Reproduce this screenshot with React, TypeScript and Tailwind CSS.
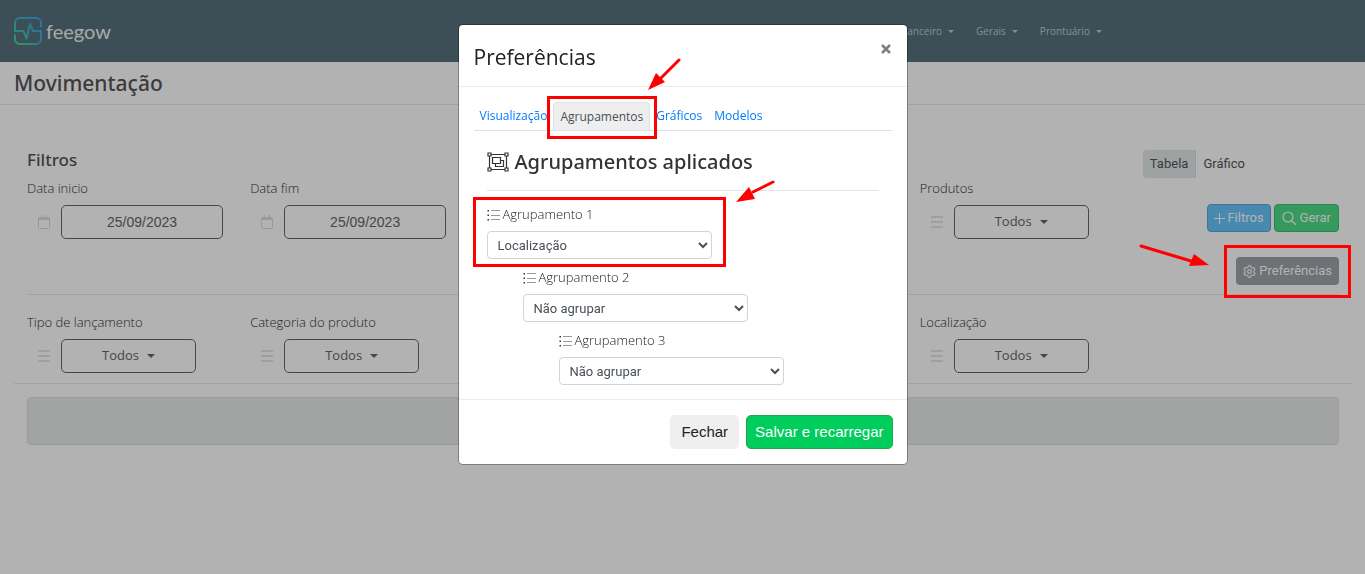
import { useState, type ReactNode } from 'react';
import clsx from 'clsx';

function Caret({ className }: { className?: string }) {
  return (
    <svg viewBox="0 0 8 4" className={clsx('shrink-0', className)} fill="currentColor">
      <path d="M0 0h8L4 4z" />
    </svg>
  );
}

function Logo() {
  return (
    <a href="#" className="flex items-center gap-1 text-[#f0f2f3]">
      <svg width="28" height="28" viewBox="0 0 28 28" fill="none" stroke="url(#logo)" strokeWidth="2" strokeLinejoin="round">
        <defs>
          <linearGradient id="logo" x1="0" y1="28" x2="28" y2="0" gradientUnits="userSpaceOnUse">
            <stop offset="0" stopColor="#4be08a" />
            <stop offset="0.5" stopColor="#3cb4c8" />
            <stop offset="1" stopColor="#4a9cee" />
          </linearGradient>
        </defs>
        <path d="M27 10.500V6a5 5 0 0 0-5-5H6a5 5 0 0 0-5 5v8h8.500l3 7.500L16 7l3 7h8v8a5 5 0 0 1-5 5H6a5 5 0 0 1-5-5v-4.500" />
      </svg>
      <span className="font-['Lato'] text-xl leading-7">feegow</span>
    </a>
  );
}

function CalendarIcon() {
  return (
    <svg width="12" height="14" viewBox="0 0 12 14" fill="none" stroke="currentColor">
      <rect x="0.5" y="2.5" width="11" height="11" rx="1" />
      <path d="M1 3.500h10M1 4.500h10M3.500 0v3M8.500 0v3" />
    </svg>
  );
}

function BarsIcon() {
  return (
    <svg width="12" height="12" viewBox="0 0 12 12" fill="none" stroke="currentColor" strokeWidth="1.500">
      <path d="M0 1h12M0 6h12M0 11h12" />
    </svg>
  );
}

function ListIcon() {
  return (
    <svg width="13" height="11" viewBox="0 0 13 11" className="shrink-0">
      <path d="M.5 0H2v1.500H.5zM.5 4.500H2V6H.5zM.5 9H2v1.500H.5z" fill="#333" />
      <path d="M4 .5h9M4 5.500h9M4 9.500h9" stroke="#999" />
    </svg>
  );
}

function GroupIcon() {
  return (
    <svg width="22" height="20" viewBox="0 0 22 20" fill="none" stroke="#333" strokeWidth="1.200" className="shrink-0">
      <path d="M3 2.500h16M3 17.500h16M2.500 3v14M19.500 3v14" />
      <path d="M1 1h3v3H1zM18 1h3v3h-3zM1 16h3v3H1zM18 16h3v3h-3z" fill="#fff" />
      <path d="M5.500 5.500h8v6h-8z" />
      <path d="M13.500 8.500h3v6h-8v-3" />
    </svg>
  );
}

function GearIcon() {
  return (
    <svg width="13" height="13" viewBox="0 0 16 16" fill="none" stroke="currentColor" strokeWidth="1.300" strokeLinejoin="round">
      <path d="M6.500 1h3l.4 2 1.500.9 2-.7 1.500 2.600-1.600 1.300v1.800l1.600 1.300-1.500 2.600-2-.7-1.500.9-.4 2h-3l-.4-2-1.500-.9-2 .7-1.500-2.600 1.600-1.300V7.100L1.100 5.800l1.500-2.600 2 .7L6.100 3z" />
      <circle cx="8" cy="8" r="2.300" />
    </svg>
  );
}

// Red frame and arrow that point out a control in the tutorial
function Frame({ className }: { className: string }) {
  return <span aria-hidden className={clsx('pointer-events-none absolute border-3 border-[#ff0000]', className)} />;
}

function Arrow({ className, width, height, line, head }: { className: string; width: number; height: number; line: string; head: string }) {
  return (
    <svg aria-hidden width={width} height={height} className={clsx('pointer-events-none absolute', className)}>
      <path d={line} stroke="#ff0000" strokeWidth="3" strokeLinecap="round" />
      <path d={head} fill="#ff0000" />
    </svg>
  );
}

function DateField({ id, label }: { id: string; label: string }) {
  const [value, setValue] = useState('25/09/2023');
  return (
    <div>
      <label htmlFor={id} className="block text-[13px] leading-5 font-light text-[#333]">{label}</label>
      <div className="mt-[7px] flex items-center">
        <span className="flex w-[34px] justify-center text-[#dcdcdc]"><CalendarIcon /></span>
        <input
          id={id}
          type="text"
          value={value}
          onChange={(e) => setValue(e.target.value)}
          className="h-[34px] w-[162px] rounded-[5px] border border-[#666] text-center font-['Liberation_Sans',sans-serif] text-sm text-[#666]"
        />
      </div>
    </div>
  );
}

function DropdownField({ id, label }: { id: string; label: string }) {
  return (
    <div>
      <label htmlFor={id} className="block text-[13px] leading-5 font-light text-[#333]">{label}</label>
      <div className="mt-[7px] flex items-center">
        <span className="flex w-[34px] justify-center text-[#dcdcdc]"><BarsIcon /></span>
        <button id={id} type="button" className="flex h-[34px] w-[135px] items-center justify-center gap-2 rounded-[5px] border border-[#666] text-[13px] text-[#666]">
          Todos
          <Caret className="h-1 w-2" />
        </button>
      </div>
    </div>
  );
}

function GroupSelect({ level, initial, className }: { level: number; initial: string; className?: string }) {
  const [value, setValue] = useState(initial);
  const id = `agrupamento-${level}`;
  return (
    <div className={clsx('w-[225px]', className)}>
      <label htmlFor={id} className="flex h-5 items-center gap-[3px] text-[13px] font-light text-[#222]">
        <ListIcon />
        Agrupamento {level}
      </label>
      <select
        id={id}
        value={value}
        onChange={(e) => setValue(e.target.value)}
        className="mt-1.5 block h-7 w-full rounded-[4px] border border-[#ced4da] bg-white px-1.5 font-['Roboto',sans-serif] text-[13px] text-[#495057]"
      >
        <option>Localização</option>
        <option>Não agrupar</option>
      </select>
    </div>
  );
}

const menus = ['Financeiro', 'Gerais', 'Prontuário'];
const tabs = ['Visualização', 'Agrupamentos', 'Gráficos', 'Modelos'];

function Modal({ children }: { children: ReactNode }) {
  return (
    <div className="fixed inset-0 z-40 flex items-start justify-center bg-black/30 pt-[25px]">
      <div role="dialog" aria-label="Preferências" className="relative w-[448px] rounded-[4px] bg-white shadow-[0_0_0_1px_rgba(0,0,0,0.3)]">
        {children}
      </div>
    </div>
  );
}

export default function App() {
  const [activeTab, setActiveTab] = useState('Agrupamentos');

  return (
    <div className="font-['Open_Sans','Noto_Sans',sans-serif] text-[#555]">
      <header className="flex h-[62px] items-center justify-between bg-[#57717c] pl-3.5 pr-[263px]">
        <Logo />
        <nav className="flex gap-[22px] text-[10px] text-[#c0cacf]">
          {menus.map((menu) => (
            <a key={menu} href="#" className="flex items-center gap-1.5">
              {menu}
              <Caret className="h-[3px] w-1.5" />
            </a>
          ))}
        </nav>
      </header>

      <div className="flex h-[43px] items-center border-b border-[#e9e9e9] px-3.5">
        <h1 className="font-['Noto_Sans',sans-serif] text-[21px] leading-7 font-medium">Movimentação</h1>
      </div>

      <main className="pt-[45px] pr-[13px] pl-3.5">
        {/* Filtros */}
        <section className="border-b border-[#e9e9e9]">
          <div className="mx-[13px] grid grid-cols-6 grid-rows-[auto_1fr] gap-x-[27px] border-b border-[#e9e9e9] pb-[9px]">
            <h2 className="col-span-5 font-['Noto_Sans',sans-serif] text-[17px] leading-5 font-medium">Filtros</h2>
            <div className="row-span-2 flex flex-col items-end">
              <div className="flex self-start font-['Roboto',sans-serif] text-[13px] text-[#555]">
                <button type="button" className="h-7 rounded-l-[4px] border-r border-[#d5dbde] bg-[#e3e8ea] px-[7px]">Tabela</button>
                <button type="button" className="h-7 rounded-r-[4px] bg-white px-[7px]">Gráfico</button>
              </div>
              <div className="mt-[26px] flex gap-[3px] font-['Roboto',sans-serif] text-[13px] text-white">
                <button type="button" className="flex h-7 items-center gap-0.5 rounded-[4px] border border-[#52a9dc] bg-[#67c5fb] px-1.5">
                  <svg width="11" height="11" viewBox="0 0 11 11" stroke="currentColor"><path d="M0 5.500h11M5.500 0v11" /></svg>
                  Filtros
                </button>
                <button type="button" className="flex h-7 items-center gap-1 rounded-[4px] border border-[#48b978] bg-[#4edb86] px-[7px]">
                  <svg width="14" height="14" viewBox="0 0 14 14" fill="none" stroke="currentColor" strokeWidth="1.200" strokeLinecap="round"><circle cx="6" cy="6" r="5" /><path d="m9.500 9.500 4 4" /></svg>
                  Gerar
                </button>
              </div>
              <div className="relative mt-[25px]">
                <button type="button" className="flex h-7 items-center gap-[3px] rounded-[4px] bg-[#9ea2a8] px-[7px] font-['Roboto',sans-serif] text-[13px] text-white">
                  <GearIcon />
                  Preferências
                </button>
                <Frame className="-top-3 -right-3 -bottom-[13px] -left-3 z-50" />
                <Arrow
                  className="-top-3.5 right-[128px] z-50"
                  width={72}
                  height={26}
                  line="M2 3l50 15"
                  head="M70 22l-20 1 5-12z"
                />
              </div>
            </div>
            <div className="col-span-5 grid grid-cols-5 gap-x-[27px] pt-2">
              <DateField id="data-inicio" label="Data inicio" />
              <DateField id="data-fim" label="Data fim" />
              <div className="col-start-5"><DropdownField id="produtos" label="Produtos" /></div>
            </div>
          </div>
          <div className="mx-[13px] grid grid-cols-6 gap-x-[27px] pt-[17px] pb-[10px]">
            <DropdownField id="tipo" label="Tipo de lançamento" />
            <DropdownField id="categoria" label="Categoria do produto" />
            <div className="col-start-5"><DropdownField id="localizacao" label="Localização" /></div>
          </div>
        </section>
        <div className="mx-[13px] mt-[13px] h-12 rounded-[4px] border border-[#dce1e1] bg-[#e8ebea]" />
      </main>

      <Modal>
        <div className="flex h-[62px] items-start justify-between border-b border-[#e9ecef] pt-[18px] pr-[15px] pl-[15px]">
          <h2 className="text-[21px] leading-7 text-[#222]">Preferências</h2>
          <button type="button" aria-label="Fechar" className="flex h-3 w-3 items-center justify-center text-[#7f7f7f]">
            <svg width="10" height="10" viewBox="0 0 10 10" stroke="currentColor" strokeWidth="2.500"><path d="m1 1 8 8M9 1 1 9" /></svg>
          </button>
        </div>

        <div className="px-[15px] pt-[15px] pb-3.5">
          <div role="tablist" className="flex border-b border-[#dee2e6] text-xs">
            {tabs.map((tab) => (
              <div key={tab} className="relative">
                <button
                  type="button"
                  role="tab"
                  aria-selected={tab === activeTab}
                  onClick={() => setActiveTab(tab)}
                  className={clsx(
                    'h-7 rounded-t-[4px] px-1.5',
                    tab === activeTab ? 'border border-b-0 border-[#dee2e6] bg-[#eee] text-[#495057]' : 'text-[#007bff]',
                  )}
                >
                  {tab}
                </button>
                {tab === 'Agrupamentos' && (
                  <>
                    <Frame className="-top-1.5 -right-[7px] -bottom-[9px] -left-1.5" />
                    <Arrow
                      className="-top-11 -right-[31px]"
                      width={34}
                      height={34}
                      line="M32 2L13 21"
                      head="M1 32l8-17 9 9z"
                    />
                  </>
                )}
              </div>
            ))}
          </div>

          <div className="px-[13px] pt-[17px]">
            <h3 className="flex items-center gap-1.5 border-b border-[#e5e5e5] pb-3.5 font-['Noto_Sans',sans-serif] text-xl leading-7 font-medium text-[#333]">
              <GroupIcon />
              Agrupamentos aplicados
            </h3>
            <div className="mt-3.5 flex flex-col gap-[9px]">
              <div className="relative w-[225px]">
                <GroupSelect level={1} initial="Localização" />
                <Frame className="-top-2 -right-3.5 -bottom-2 -left-3.5" />
                <Arrow
                  className="-top-[26px] -right-[63px]"
                  width={40}
                  height={24}
                  line="M38 3L18 13"
                  head="M1 23l13-15 6 12z"
                />
              </div>
              <GroupSelect level={2} initial="Não agrupar" className="ml-9" />
              <GroupSelect level={3} initial="Não agrupar" className="ml-[72px]" />
            </div>
          </div>
        </div>

        <div className="flex justify-end gap-[7px] border-t border-[#e9ecef] px-3.5 py-[15px] font-['Liberation_Sans',sans-serif] text-[15px]">
          <button type="button" className="h-[34px] rounded-[5px] bg-[#efefef] px-[11px] text-[#222]">Fechar</button>
          <button type="button" className="h-[34px] rounded-[5px] border border-[#28a745] bg-[#00cd5c] px-2 text-white">Salvar e recarregar</button>
        </div>
      </Modal>
    </div>
  );
}
